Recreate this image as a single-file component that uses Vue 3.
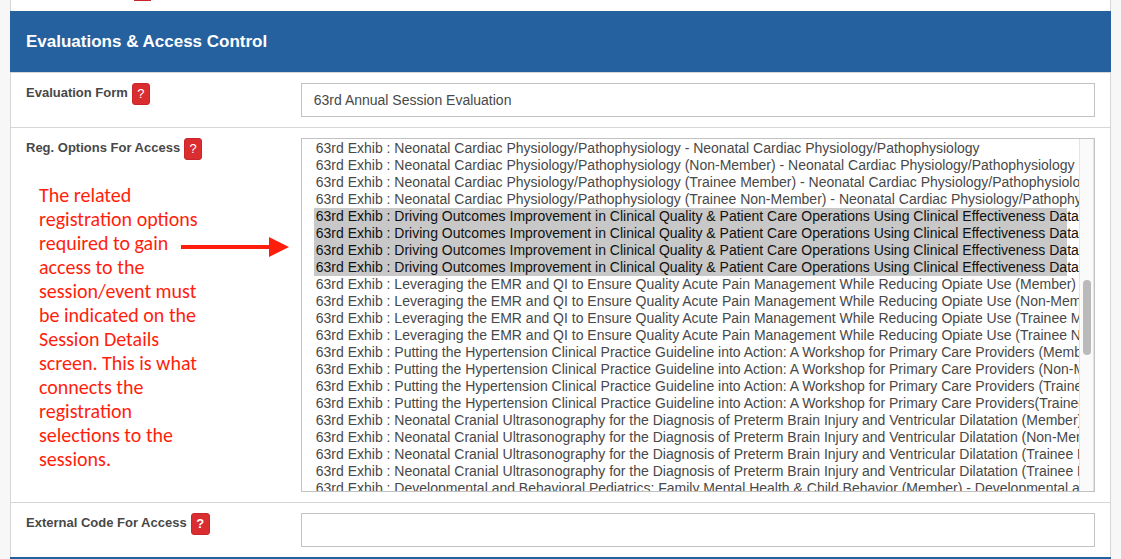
<template>
  <main class="page">
    <div class="panel">
      <div class="previous-row">
        <span class="previous-row__help"></span>
      </div>

      <h2 class="section-title">Evaluations &amp; Access Control</h2>

      <div class="row">
        <div class="row__label">
          <label for="evaluation-form">Evaluation Form</label>
          <button type="button" class="help" aria-label="Help for evaluation form">?</button>
        </div>
        <div class="row__field">
          <input id="evaluation-form" v-model="evaluationForm" type="text" class="control" />
        </div>
      </div>

      <div class="row">
        <div class="row__label">
          <label for="reg-options">Reg. Options For Access</label>
          <button type="button" class="help" aria-label="Help for reg. options">?</button>
          <p class="note">{{ note }}</p>
          <svg class="arrow" viewBox="0 0 108 20" aria-hidden="true">
            <path d="M0 8H88V0L108 10L88 20V12H0Z" fill="#ff1e0c" />
          </svg>
        </div>
        <div class="row__field">
          <div class="listbox">
            <select id="reg-options" ref="listbox" v-model="selected" multiple size="20" class="listbox__select">
              <option v-for="(option, index) in options" :key="index" :value="index">{{ option }}</option>
            </select>
            <div class="listbox__track" aria-hidden="true">
              <div class="listbox__thumb"></div>
            </div>
          </div>
        </div>
      </div>

      <div class="row">
        <div class="row__label">
          <label for="external-code">External Code For Access</label>
          <button type="button" class="help help--bold" aria-label="Help for external code">?</button>
        </div>
        <div class="row__field">
          <input id="external-code" v-model="externalCode" type="text" class="control" />
        </div>
      </div>

      <div class="section-title"></div>
    </div>
  </main>
</template>

<script setup>
import { nextTick, onMounted, ref } from 'vue'

const evaluationForm = ref('63rd Annual Session Evaluation')
const externalCode = ref('')
const selected = ref([4, 5, 6, 7])
const listbox = ref(null)

const note = `The related
registration options
required to gain
access to the
session/event must
be indicated on the
Session Details
screen. This is what
connects the
registration
selections to the
sessions.`

const cardiac = 'Neonatal Cardiac Physiology/Pathophysiology'
const outcomes =
  'Driving Outcomes Improvement in Clinical Quality & Patient Care Operations Using Clinical Effectiveness Data'
const pain = 'Leveraging the EMR and QI to Ensure Quality Acute Pain Management While Reducing Opiate Use'
const hypertension =
  'Putting the Hypertension Clinical Practice Guideline into Action: A Workshop for Primary Care Providers'
const cranial =
  'Neonatal Cranial Ultrasonography for the Diagnosis of Preterm Brain Injury and Ventricular Dilatation'
const behavioral = 'Developmental and Behavioral Pediatrics: Family Mental Health & Child Behavior'

const options = [
  `${cardiac} - ${cardiac}`,
  `${cardiac} (Non-Member) - ${cardiac}`,
  `${cardiac} (Trainee Member) - ${cardiac}`,
  `${cardiac} (Trainee Non-Member) - ${cardiac}`,
  `${outcomes} (Member)`,
  `${outcomes} (Non-Member)`,
  `${outcomes} (Trainee Member)`,
  `${outcomes} (Trainee Non-Member)`,
  `${pain} (Member)`,
  `${pain} (Non-Member)`,
  `${pain} (Trainee Member)`,
  `${pain} (Trainee Non-Member)`,
  `${hypertension} (Member)`,
  `${hypertension} (Non-Member)`,
  `${hypertension} (Trainee Member)`,
  `${hypertension}(Trainee Non-Member)`,
  `${cranial} (Member)`,
  `${cranial} (Non-Member)`,
  `${cranial} (Trainee Member)`,
  `${cranial} (Trainee Non-Member)`,
  `${behavioral} (Member) - ${behavioral}`,
  `${behavioral} (Non-Member) - ${behavioral}`,
].map((name) => `63rd Exhib : ${name}`)

onMounted(async () => {
  await nextTick()
  listbox.value.scrollTop = 5
})
</script>

<style>
body {
  margin: 0;
  background: #f7f7f7;
}
</style>

<style scoped>
.page {
  box-sizing: border-box;
  height: 100vh;
  overflow: hidden;
  padding: 0 10px;
  color: #484848;
  font-family: 'Liberation Sans', Arial, sans-serif;
  font-size: 14px;
}

.panel {
  border: solid #d6d6d6;
  border-width: 0 1px;
  background: #ffffff;
}

.previous-row {
  height: 11px;
}

.previous-row__help {
  display: block;
  width: 17px;
  height: 1px;
  margin-left: 123px;
  background: #c9252b;
}

.section-title {
  box-sizing: border-box;
  height: 61px;
  margin: 0 -1px;
  padding: 0 16px;
  background: #25619f;
  color: #ffffff;
  font-size: 17px;
  font-weight: 700;
  line-height: 62px;
}

.row {
  display: grid;
  grid-template-columns: 25% 75%;
  border-top: 1px solid #d6d6d6;
}

.row__label {
  position: relative;
  padding: 10px 0 10px 15px;
  font-size: 13px;
  font-weight: 700;
  line-height: 20px;
}

.row__field {
  min-width: 0;
  padding: 10px 15px;
}

.help {
  box-sizing: border-box;
  width: 18px;
  height: 22px;
  margin-left: 4px;
  padding: 0;
  border: 1px solid #c9252b;
  border-radius: 3px;
  background: #d92d30;
  color: #ffffff;
  font-family: inherit;
  font-size: 13px;
  line-height: 18px;
  vertical-align: middle;
}

.help--bold {
  width: 19px;
  font-weight: 700;
}

.control {
  box-sizing: border-box;
  display: block;
  width: 100%;
  height: 34px;
  padding: 6px 12px;
  border: 1px solid #c2c2c2;
  border-radius: 0;
  background: #ffffff;
  color: #484848;
  font-family: inherit;
  font-size: 14px;
}

.note {
  margin: 23px 0 0 13px;
  color: #ff1e0c;
  font-family: Carlito, Calibri, Lato, sans-serif;
  font-size: 20px;
  font-weight: 400;
  line-height: 24px;
  white-space: pre-line;
}

/* points from the note to the selected options */
.arrow {
  position: absolute;
  top: 109px;
  right: -3px;
  width: 108px;
  height: 20px;
}

.listbox {
  position: relative;
}

.listbox__select {
  box-sizing: border-box;
  display: block;
  width: 100%;
  height: 354px;
  padding: 6px 27px 6px 12px;
  border: 1px solid #c2c2c2;
  border-radius: 0;
  outline: 0;
  background: #ffffff;
  color: #484848;
  font-family: inherit;
  font-size: 14px;
  scrollbar-width: none;
}

.listbox__select option {
  min-height: 0;
  padding: 0 2px 1px;
  line-height: 16px;
}

.listbox__select option:checked {
  background: #c8c8c8;
  color: #101010;
}

.listbox__track {
  position: absolute;
  top: 1px;
  right: 1px;
  bottom: 1px;
  box-sizing: border-box;
  width: 15px;
  border: solid #e4e4e4;
  border-width: 0 1px;
  background: #fafafa;
}

.listbox__thumb {
  width: 8px;
  height: 75px;
  margin: 141px auto 0 3px;
  border-radius: 4px;
  background: #bababa;
}
</style>
